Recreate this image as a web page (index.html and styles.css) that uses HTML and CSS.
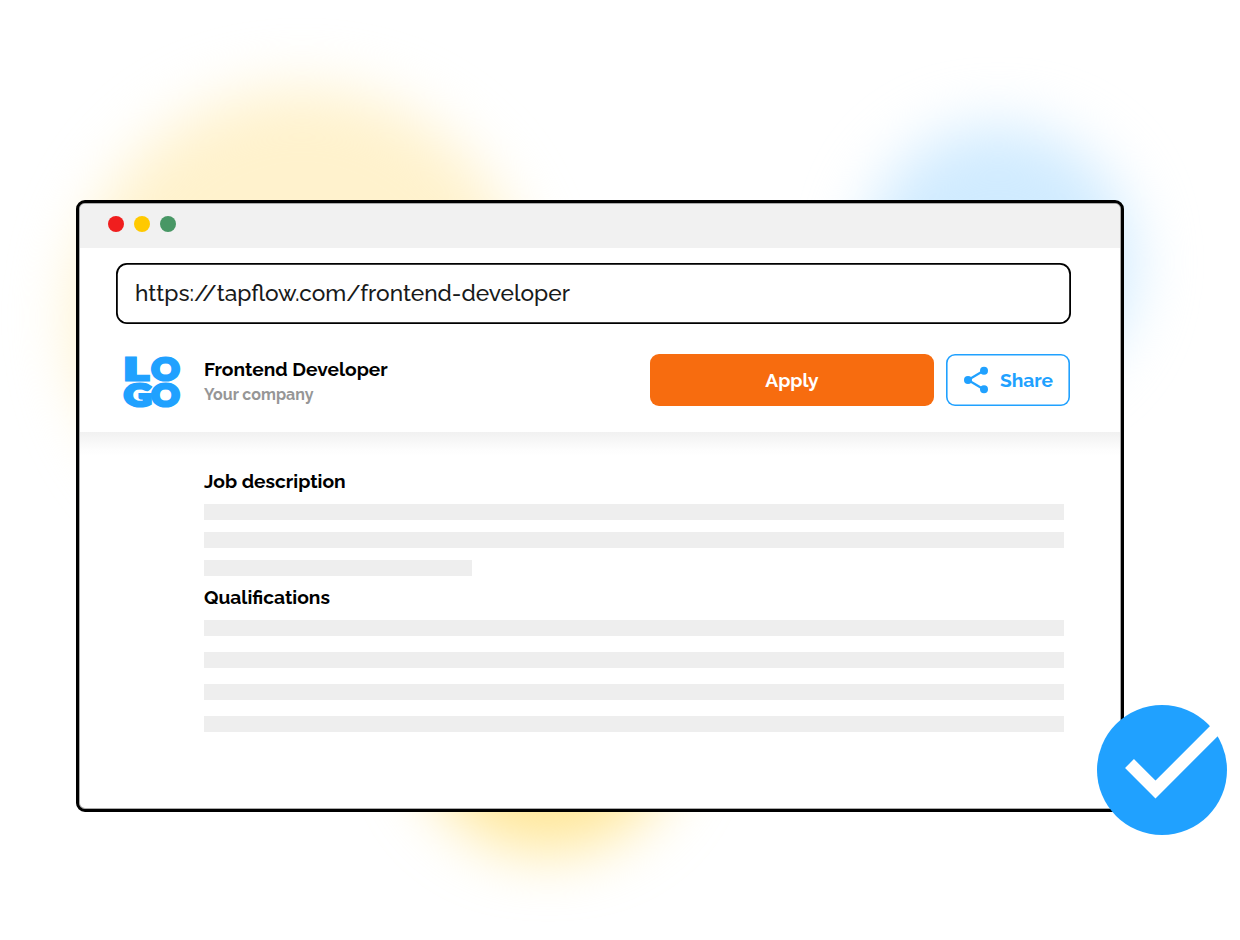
FILE: index.html
```html
<!DOCTYPE html>
<html lang="en">
<head>
<meta charset="utf-8">
<title>Frontend Developer</title>
<link rel="stylesheet" href="styles.css">
</head>
<body>
<div class="stage">
  <div class="glow glow-cream"></div>
  <div class="glow glow-blue"></div>
  <div class="glow glow-yellow"></div>
  <main class="window">
    <div class="titlebar"><span class="dot red"></span><span class="dot amber"></span><span class="dot green"></span></div>
    <header class="top">
      <div class="address"><span class="url">https://tapflow.com/frontend-developer</span></div>
      <div class="job">
        <svg class="logo" width="58" height="54" viewBox="0 0 58 54">
          <text x="0.8" y="25.8" textLength="24.5" lengthAdjust="spacingAndGlyphs">L</text>
          <text x="28.4" y="25.8" textLength="28" lengthAdjust="spacingAndGlyphs">O</text>
          <text x="0.9" y="52.2" textLength="27.5" lengthAdjust="spacingAndGlyphs">G</text>
          <text x="28.4" y="52.2" textLength="28" lengthAdjust="spacingAndGlyphs">O</text>
        </svg>
        <div class="names">
          <h1 class="title">Frontend Developer</h1>
          <p class="company">Your company</p>
        </div>
        <button class="apply"><span>Apply</span></button>
        <button class="share">
          <svg class="share-icon" width="26" height="28" viewBox="0 0 26 28"><path d="M21 4.5 5 14l16 9.5" fill="none" stroke="#20a1ff" stroke-width="2.2"/><g fill="#20a1ff"><circle cx="21" cy="4.7" r="4"/><circle cx="5" cy="14" r="4"/><circle cx="21" cy="23.3" r="4"/></g></svg>
          <span>Share</span>
        </button>
      </div>
    </header>
    <section class="content">
      <h2 class="section-title">Job description</h2>
      <div class="lines tight"><div class="line"></div><div class="line"></div><div class="line short"></div></div>
      <h2 class="section-title qualifications">Qualifications</h2>
      <div class="lines"><div class="line"></div><div class="line"></div><div class="line"></div><div class="line"></div></div>
    </section>
  </main>
  <svg class="check" width="130" height="130" viewBox="0 0 130 130"><circle cx="65" cy="65" r="65" fill="#20a1ff"/><path d="M32.5 58.5 58.5 84.5 122 21" fill="none" stroke="#fff" stroke-width="12.6"/></svg>
</div>
</body>
</html>
```
FILE: styles.css
```css
* { box-sizing: border-box; }
body { margin: 0; background: #fff; font-family: Raleway, Lato, sans-serif; color: #000; }
.stage { position: relative; width: 1240px; height: 940px; overflow: hidden; padding: 200px 0 0 76px; }
.glow { position: absolute; border-radius: 50%; }
.glow-cream { left: 72px; top: 88px; width: 460px; height: 460px; background: #fff2cd; filter: blur(30px); }
.glow-blue { left: 862px; top: 126px; width: 272px; height: 272px; background: #d0ebff; filter: blur(30px); }
.glow-yellow { left: 412px; top: 580px; width: 272px; height: 272px; background: #ffe799; filter: blur(30px); }
.window { position: relative; width: 1048px; height: 612px; border: 3px solid #000; border-radius: 9px; background: #fff; box-shadow: inset 0 0 0 1px #aaa; overflow: hidden; padding: 1px; }
.titlebar { height: 44px; background: #f1f1f1; display: flex; gap: 9.8px; padding: 12px 0 0 28px; border-radius: 5px 5px 0 0; }
.dot { width: 16px; height: 16px; border-radius: 50%; }
.red { background: #f01e1e; }
.amber { background: #ffc900; }
.green { background: #489765; }
.top { height: 184px; padding: 14.5px 49px 0 36px; }
.address { height: 61.5px; width: 955px; box-shadow: inset 0 0 0 1.8px #000; border-radius: 11px; display: flex; align-items: center; padding-left: 19px; }
.url { font-size: 22.7px; font-weight: 500; color: #181a1a; white-space: nowrap; }
.job { display: flex; padding: 30px 0 0 7px; }
.logo { width: 58px; height: 54px; overflow: visible; font: 900 31px Lato, sans-serif; fill: #20a1ff; stroke: #20a1ff; stroke-width: 3.2px; }
.names { width: 446px; margin-left: 23px; }
.title { margin: 3px 0 0; font-size: 19.2px; line-height: 24px; font-weight: 700; }
.company { margin: 3px 0 0; font-size: 16px; line-height: 22px; font-weight: 700; color: #969696; }
.apply, .share { height: 51.5px; border: 0; border-radius: 9px; font-family: inherit; font-size: 19.2px; font-weight: 700; padding: 0 0 .4px; }
.apply { width: 284px; background: #f76c0f; color: #fff; }
.share { width: 124px; margin-left: 12px; box-shadow: inset 0 0 0 1.6px #20a1ff; background: #fff; color: #20a1ff; display: flex; align-items: center; padding-left: 17px; gap: 11px; }
.share-icon { margin-top: 1px; }
.content { padding: 37px 56px 0 124px; background: linear-gradient(#f1f1f1, #f7f7f7 9px, #fdfdfd 18px, #fff 24px) 0 0 / 100% 24px no-repeat; }
.section-title { margin: 0; font-size: 19.2px; font-weight: 700; line-height: 24px; }
.qualifications { margin-top: 9px; }
.lines { display: grid; gap: 16px; margin-top: 11px; }
.tight { gap: 12px; }
.line { height: 16px; background: #eee; }
.short { width: 268px; }
.check { position: absolute; left: 1097px; top: 705px; }
```
